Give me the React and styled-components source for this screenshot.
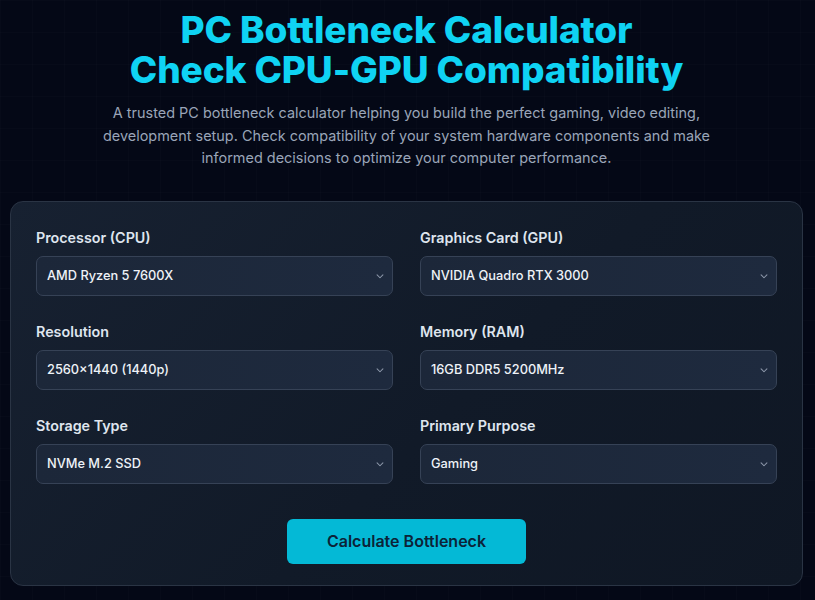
import React from 'react';
import styled, { createGlobalStyle } from 'styled-components';

const GlobalStyle = createGlobalStyle`
  html, body {
    margin: 0;
    padding: 0;
    background: #040816;
  }
  body {
    font-family: Inter, "Noto Sans", sans-serif;
    -webkit-font-smoothing: antialiased;
  }
`;

const Page = styled.div`
  min-height: 600px;
  box-sizing: border-box;
  padding: 10px 12px 14px 10px;
  background-color: #040816;
  background-image:
    linear-gradient(rgba(255, 255, 255, 0.012) 1px, transparent 1px),
    linear-gradient(90deg, rgba(255, 255, 255, 0.012) 1px, transparent 1px);
  background-size: 32px 32px;
`;

const Hero = styled.header`
  display: flex;
  flex-direction: column;
  align-items: center;
  text-align: center;
`;

const Title = styled.h1`
  margin: 0;
  font-size: 37px;
  font-weight: 800;
  letter-spacing: -0.1px;
  color: #0fd3f3;
`;

const TitleLine = styled.span`
  display: block;
  line-height: 40px;
  height: 40px;
`;

const Lead = styled.p`
  margin: 12px 0 0;
  max-width: 630px;
  font-size: 14.45px;
  line-height: 22.5px;
  color: #9aa5b8;
`;

const Card = styled.section`
  margin-top: 31px;
  padding: 26px 25px 21px;
  border: 1px solid #2a3444;
  border-radius: 13px;
  background: linear-gradient(135deg, #172131 0%, #111a28 55%, #0f1724 100%);
`;

const Grid = styled.div`
  display: grid;
  grid-template-columns: 1fr 1fr;
  column-gap: 27px;
  row-gap: 26px;
`;

const Field = styled.div`
  display: flex;
  flex-direction: column;
  gap: 8px;
`;

const Label = styled.label`
  font-size: 14.3px;
  line-height: 20px;
  font-weight: 600;
  color: #dfe5ee;
`;

const Select = styled.div`
  display: flex;
  align-items: center;
  justify-content: space-between;
  height: 40px;
  box-sizing: border-box;
  padding: 0 5px 0 10px;
  border: 1px solid #364256;
  border-radius: 7px;
  background: linear-gradient(90deg, #1c2739 0%, #1e2a3e 100%);
  font-size: 12.8px;
  font-weight: 500;
  color: #eef2f7;
`;

const Chevron = styled.svg`
  width: 14px;
  height: 14px;
  color: #8c97a9;
  flex: none;
`;

const Actions = styled.div`
  display: flex;
  justify-content: center;
  margin-top: 35px;
`;

const Button = styled.button`
  width: 239px;
  height: 45px;
  border: none;
  border-radius: 6px;
  background: #04b9d6;
  color: #0c2338;
  font-family: inherit;
  font-size: 16px;
  font-weight: 600;
  cursor: pointer;
`;

const fields = [
  { label: 'Processor (CPU)', value: 'AMD Ryzen 5 7600X' },
  { label: 'Graphics Card (GPU)', value: 'NVIDIA Quadro RTX 3000' },
  { label: 'Resolution', value: '2560×1440 (1440p)' },
  { label: 'Memory (RAM)', value: '16GB DDR5 5200MHz' },
  { label: 'Storage Type', value: 'NVMe M.2 SSD' },
  { label: 'Primary Purpose', value: 'Gaming' },
];

const App = () => (
  <Page>
    <GlobalStyle />
    <Hero>
      <Title>
        <TitleLine>PC Bottleneck Calculator</TitleLine>
        <TitleLine>Check CPU-GPU Compatibility</TitleLine>
      </Title>
      <Lead>
        A trusted PC bottleneck calculator helping you build the perfect gaming, video editing,
        development setup. Check compatibility of your system hardware components and make
        informed decisions to optimize your computer performance.
      </Lead>
    </Hero>
    <Card>
      <Grid>
        {fields.map((f) => (
          <Field key={f.label}>
            <Label>{f.label}</Label>
            <Select>
              <span>{f.value}</span>
              <Chevron viewBox="0 0 24 24" fill="none" stroke="currentColor" strokeWidth="1.8" strokeLinecap="round" strokeLinejoin="round">
                <path d="M7 10l5 5 5-5" />
              </Chevron>
            </Select>
          </Field>
        ))}
      </Grid>
      <Actions>
        <Button>Calculate Bottleneck</Button>
      </Actions>
    </Card>
  </Page>
);

export default App;
